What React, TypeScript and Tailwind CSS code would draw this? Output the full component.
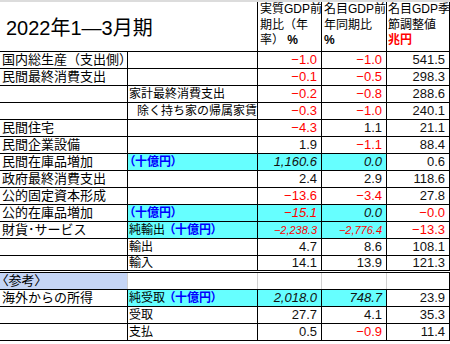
import React from "react";

type Val = { t: string; red?: boolean; it?: boolean; sm?: boolean };

interface Row {
  a?: string;
  b?: React.ReactNode;
  indent?: boolean;
  cyan?: boolean;
  v: Val[];
}

const r = (t: string, it = false, sm = false): Val => ({ t, red: true, it, sm });
const k = (t: string, it = false): Val => ({ t, it });

const Unit = () => (
  <span className="font-bold text-[#0000ff] [font-feature-settings:'palt']">（十億円）</span>
);

const rows: Row[] = [
  { a: "国内総生産（支出側）", v: [r("−1.0"), r("−1.0"), k("541.5")] },
  { a: "民間最終消費支出", v: [r("−0.1"), r("−0.5"), k("298.3")] },
  { b: "家計最終消費支出", v: [r("−0.2"), r("−0.8"), k("288.6")] },
  { b: "除く持ち家の帰属家賃", indent: true, v: [r("−0.3"), r("−1.0"), k("240.1")] },
  { a: "民間住宅", v: [r("−4.3"), k("1.1"), k("21.1")] },
  { a: "民間企業設備", v: [k("1.9"), r("−1.1"), k("88.4")] },
  { a: "民間在庫品増加", b: <Unit />, cyan: true, v: [k("1,160.6", true), k("0.0", true), k("0.6")] },
  { a: "政府最終消費支出", v: [k("2.4"), k("2.9"), k("118.6")] },
  { a: "公的固定資本形成", v: [r("−13.6"), r("−3.4"), k("27.8")] },
  { a: "公的在庫品増加", b: <Unit />, cyan: true, v: [r("−15.1", true), k("0.0", true), r("−0.0")] },
  {
    a: "財貨･サービス",
    b: (
      <>
        純輸出<span className="w-[4px] inline-block"></span>
        <Unit />
      </>
    ),
    cyan: true,
    v: [r("−2,238.3", true, true), r("−2,776.4", true, true), r("−13.3")],
  },
  { b: "輸出", v: [k("4.7"), k("8.6"), k("108.1")] },
  { b: "輸入", v: [k("14.1"), k("13.9"), k("121.3")] },
];

const foreign: Row[] = [
  {
    a: "海外からの所得",
    b: (
      <>
        純受取<span className="w-[4px] inline-block"></span>
        <Unit />
      </>
    ),
    cyan: true,
    v: [k("2,018.0", true), k("748.7", true), k("23.9")],
  },
  { b: "受取", v: [k("27.7"), k("4.1"), k("35.3")] },
  { b: "支払", v: [k("0.5"), r("−0.9"), k("11.4")] },
];

const numWidths = ["w-[64px]", "w-[65px]", "w-[63px]"];

function Num({ val, w, cyan }: { val: Val; w: string; cyan?: boolean }) {
  return (
    <div
      className={`${w} h-full flex items-center justify-end pr-[4px] border-r border-black whitespace-nowrap ${
        cyan ? "bg-[#66ffff]" : ""
      } ${val.red ? "text-[#ff0000]" : "text-[#111]"} ${val.it ? "italic" : ""} ${
        val.sm ? "text-[11px]" : "text-[13px]"
      }`}
    >
      {val.t}
    </div>
  );
}

function DataRow({ row, last }: { row: Row; last?: boolean }) {
  return (
    <div
      className={`flex h-[17px] border-black ${
        last ? "border-b-[3px] border-double" : "border-b"
      }`}
    >
      <div className="w-[128px] h-full flex items-center pl-[2px] border-r border-black text-[13px] whitespace-nowrap">
        {row.a}
      </div>
      <div
        className={`w-[130px] h-full flex items-center border-r border-black text-[12px] whitespace-nowrap ${
          row.indent ? "pl-[9px]" : "pl-[1px]"
        } ${row.cyan ? "bg-[#66ffff]" : ""}`}
      >
        {row.b}
      </div>
      {row.v.map((val, i) => (
        <Num key={i} val={val} w={numWidths[i]} cyan={row.cyan && i < 2} />
      ))}
    </div>
  );
}

const App: React.FC = () => {
  return (
    <div className="w-[450px] h-[344px] bg-white border-t-2 border-[#dcdcdc] overflow-hidden text-black font-['Liberation_Sans','Noto_Sans_CJK_JP',sans-serif]">
      <div className="flex h-[50px] border-b border-black">
        <div className="w-[258px] h-full flex items-center pl-[6px] pt-[3px] border-r border-black text-[20px] whitespace-nowrap">
          2022年1—3月期
        </div>
        <div className="w-[64px] h-full pl-[2px] border-r border-black text-[12px] leading-[15.5px] whitespace-nowrap">
          実質GDP前
          <br />
          期比（年
          <br />
          率） <b>%</b>
        </div>
        <div className="w-[65px] h-full pl-[2px] border-r border-black text-[12px] leading-[15.5px] whitespace-nowrap">
          名目GDP前
          <br />
          年同期比
          <br />
          <b>%</b>
        </div>
        <div className="w-[63px] h-full pl-[1px] border-r border-black text-[12px] leading-[15.5px] whitespace-nowrap">
          名目GDP季
          <br />
          節調整値
          <br />
          <b className="text-[#ff0000]">兆円</b>
        </div>
      </div>

      {rows.map((row, i) => (
        <DataRow key={i} row={row} last={i === rows.length - 1} />
      ))}

      <div className="flex h-[17px] border-b border-black">
        <div className="w-[128px] h-full flex items-center pl-[2px] bg-[#c5d5f5] border-r border-[#d0d0d0] text-[13px] whitespace-nowrap [font-feature-settings:'palt']">
          〈参考〉
        </div>
        <div className="w-[130px] h-full border-r border-[#d0d0d0]"></div>
        <div className="w-[64px] h-full border-r border-[#d0d0d0]"></div>
        <div className="w-[65px] h-full border-r border-[#d0d0d0]"></div>
        <div className="w-[63px] h-full border-r border-black"></div>
      </div>

      {foreign.map((row, i) => (
        <DataRow key={i} row={row} />
      ))}
    </div>
  );
};

export default App;
